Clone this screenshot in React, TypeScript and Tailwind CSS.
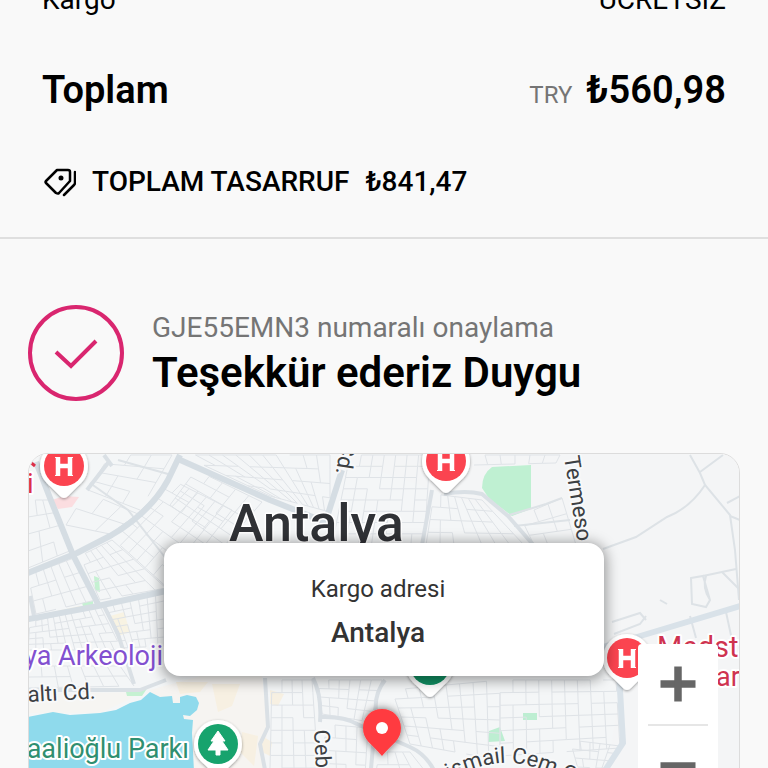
import { Minus, Plus } from "lucide-react";

type Point = [number, number];

type Block = {
  corners: [Point, Point, Point, Point];
  cols: number;
  rows: number;
};

// Residential blocks: each quad is split into cols x rows parcels
const blocks: Block[] = [
  { corners: [[110, 455], [172, 455], [140, 510], [88, 490]], cols: 3, rows: 4 },
  { corners: [[86, 492], [138, 514], [110, 534], [66, 525]], cols: 3, rows: 2 },
  { corners: [[28, 500], [50, 500], [72, 550], [28, 568]], cols: 3, rows: 4 },
  { corners: [[28, 575], [74, 558], [96, 600], [36, 614]], cols: 6, rows: 3 },
  { corners: [[172, 480], [232, 510], [170, 590], [112, 538]], cols: 7, rows: 7 },
  { corners: [[80, 556], [112, 540], [166, 588], [100, 600]], cols: 6, rows: 5 },
  { corners: [[182, 455], [330, 455], [330, 512], [270, 496]], cols: 11, rows: 4 },
  { corners: [[196, 470], [262, 502], [225, 545], [170, 505]], cols: 5, rows: 5 },
  { corners: [[350, 455], [430, 455], [424, 545], [332, 545]], cols: 7, rows: 8 },
  { corners: [[434, 494], [482, 500], [524, 545], [426, 545]], cols: 7, rows: 4 },
  { corners: [[470, 455], [560, 455], [556, 463], [474, 465]], cols: 6, rows: 1 },
  { corners: [[520, 516], [562, 498], [576, 545], [534, 545]], cols: 3, rows: 3 },
  { corners: [[30, 622], [100, 606], [122, 650], [28, 650]], cols: 12, rows: 5 },
  { corners: [[104, 606], [164, 592], [164, 646], [122, 648]], cols: 7, rows: 6 },
  { corners: [[28, 666], [120, 666], [134, 686], [28, 688]], cols: 7, rows: 2 },
  { corners: [[272, 680], [312, 680], [318, 768], [270, 768]], cols: 4, rows: 7 },
  { corners: [[318, 680], [382, 680], [370, 722], [322, 714]], cols: 6, rows: 4 },
  { corners: [[324, 724], [368, 728], [364, 790], [328, 790]], cols: 4, rows: 5 },
  { corners: [[392, 690], [500, 680], [500, 760], [410, 744]], cols: 8, rows: 6 },
  { corners: [[380, 752], [410, 752], [440, 790], [372, 790]], cols: 4, rows: 3 },
  { corners: [[500, 680], [616, 680], [620, 748], [500, 756]], cols: 9, rows: 6 },
  { corners: [[570, 740], [620, 746], [604, 776], [580, 776]], cols: 5, rows: 4 },
];

const mainRoads = [
  "M28 573 77 553 110 536Q150 513 168 480L180 455",
  "M178 459 270 500 330 524",
  "M36 462 50 498 73 555 98 604",
  "M24 620 98 606 166 591",
  "M342 470 328 514",
];

const sideRoads = [
  "M108 463 87 490M104 455 112 466",
  "M432 490 422 545",
  "M444 494Q466 490 482 494L508 516 536 548",
  "M104 606 118 634 134 684",
  "M28 690H140L166 680",
  "M30 596 34 616",
  "M313 678Q322 696 320 722M385 680Q374 694 376 712L370 780",
  "M320 717Q344 716 357 724L410 747Q430 756 438 780",
  "M265 678 268 727 260 744 267 780",
];

const thinRoads = [
  "M690 455 700 473 705 485 730 515 735 550 739 600",
  "M705 485 Q690 508 667 517L636 537 603 549",
  "M700 472 723 455M727 503 740 496M730 516 740 520",
  "M691 578 703 576 710 600 706 607 692 604ZM703 576 736 569M706 576Q702 588 710 600",
  "M722 572 740 590M660 600 667 604M612 622 640 613 646 620",
  "M614 634 640 624 646 616M690 616 696 638M726 612 732 640",
  "M118 460 168 474M90 483 128 510 164 556 200 600",
  "M506 516 546 504 562 498M514 526 570 520",
];

// Streets with a few segments left out, so that the parcels differ in size
function streetPath({ corners, cols, rows }: Block) {
  const [a, b, c, d] = corners;
  const at = (u: number, v: number) => {
    const x = (1 - v) * ((1 - u) * a[0] + u * b[0]) + v * ((1 - u) * d[0] + u * c[0]);
    const y = (1 - v) * ((1 - u) * a[1] + u * b[1]) + v * ((1 - u) * d[1] + u * c[1]);
    return `${x.toFixed(1)} ${y.toFixed(1)}`;
  };
  let path = "";
  for (let i = 0; i <= cols; i++) {
    for (let j = 0; j <= rows; j++) {
      if (i < cols && (i * 3 + j * 5) % 7 !== 0) {
        path += `M${at(i / cols, j / rows)}L${at((i + 1) / cols, j / rows)}`;
      }
      if (j < rows && (i * 5 + j * 3) % 8 !== 0) {
        path += `M${at(i / cols, j / rows)}L${at(i / cols, (j + 1) / rows)}`;
      }
    }
  }
  return path;
}

function PlacePin({ x, y, color, children }: { x: number; y: number; color: string; children?: React.ReactNode }) {
  return (
    <g transform={`translate(${x} ${y})`}>
      <path
        d="M0 -24A24 24 0 0 1 24 0C24 10 19 16 13 21L4 30Q0 34 -4 30L-13 21C-19 16 -24 10 -24 0A24 24 0 0 1 0 -24Z"
        fill="#fff"
        filter="url(#pin-shadow)"
      />
      <circle r="20" fill={color} />
      {children}
    </g>
  );
}

function HospitalPin({ x, y }: { x: number; y: number }) {
  return (
    <PlacePin x={x} y={y} color="#fb4450">
      <path d="M-6 -9V10M6 -9V10M-6 0H6" stroke="#fff" strokeWidth="4.5" fill="none" />
      <path d="M-9 -8.5H-4M4 -8.5H9M-9 9.5H-4M4 9.5H9" stroke="#fff" strokeWidth="1" />
    </PlacePin>
  );
}

function MapCanvas() {
  return (
    <svg
      viewBox="29 454 710 400"
      preserveAspectRatio="xMidYMin slice"
      className="block h-[400px] w-full bg-[#f4f5f6] font-['Roboto',sans-serif]"
      role="img"
      aria-label="Antalya"
    >
      <defs>
        <filter id="pin-shadow" x="-30%" y="-30%" width="160%" height="160%">
          <feDropShadow dx="0" dy="1" stdDeviation="1.5" floodColor="#000" floodOpacity="0.4" />
        </filter>
        <filter id="marker-shadow" x="-50%" y="-50%" width="200%" height="200%">
          <feDropShadow dx="0" dy="0" stdDeviation="4" floodColor="#000" floodOpacity="0.6" />
        </filter>
        <path id="ismail-cem" d="M450 779Q474 766 500 763Q530 760 580 787" />
      </defs>

      {/* Ground */}
      <path d="M28 454H330L600 548 620 690 604 790H28Z" fill="#f4f6f7" />
      <path d="M150 690 200 676H262L268 727 260 790H190Z" fill="#f6f4f1" />
      <path d="M28 694 140 692 128 700 100 713H28Z" fill="#f6f5f2" />
      <path d="M176 682 208 682 200 692 180 694ZM212 684 240 684 232 706 218 712ZM242 732 258 736 254 766 240 752ZM270 690 284 694 278 706 270 704ZM262 736 272 742 270 756 262 752Z" fill="#f7f0e2" />
      <path d="M34 616 80 606 82 609 36 619ZM110 616 124 612 130 632 118 636Z" fill="#f8f3e3" />
      <path d="M52 500 64 496 79 497 72 507 58 509Z" fill="#fbdde0" />
      <path d="M482 488Q482 474 492 467L531 465V509L512 516 500 507 490 500Z" fill="#bff0d2" />
      <path d="M82 603 93 601 93 608 84 609ZM94 576 99 578 100 592 95 590ZM126 692 148 687 142 696 127 696Z" fill="#c5f1d2" />
      <path d="M489 731 500 727 505 741 488 742ZM523 713H537V720H523Z" fill="#bdeed2" />

      {/* Streets */}
      <g fill="none" stroke="#dfe3e7" strokeWidth="1">
        {blocks.map((block, i) => (
          <path key={i} d={streetPath(block)} />
        ))}
      </g>
      <g fill="none" stroke="#dde2e6" strokeWidth="2">
        {thinRoads.map((d) => (
          <path key={d} d={d} />
        ))}
      </g>
      <g fill="none" stroke="#dae0e5" strokeWidth="4" strokeLinejoin="round">
        {sideRoads.map((d) => (
          <path key={d} d={d} />
        ))}
      </g>
      <g fill="none" stroke="#d5dde3" strokeWidth="6" strokeLinejoin="round">
        {mainRoads.map((d) => (
          <path key={d} d={d} />
        ))}
      </g>
      <path
        d="M740 606 637 637 600 648M620 676V690L623 743 604 772"
        fill="none"
        stroke="#d9e2e9"
        strokeWidth="6"
      />

      {/* Sea */}
      <path
        d="M28 717 53 712 70 715 100 713 116 710 130 703 141 700 150 692 160 697 172 696 173 703 180 703 180 697 187 695 196 697 199 703 197 710 190 716 183 715 184 719 193 720 192 733 195 790V860H28Z"
        fill="#8fdaec"
      />

      {/* Street names */}
      <g fill="#3c4043" stroke="#f8f9fa" strokeWidth="4" strokeLinejoin="round" paintOrder="stroke" fontSize="22">
        <text transform="translate(341 441) rotate(99)">Cd.</text>
        <text transform="translate(564 457) rotate(81)">Termeso</text>
        <text transform="translate(28 702) rotate(-3)">altı Cd.</text>
        <text transform="translate(314 730) rotate(87)">Cebesoy</text>
        <text>
          <textPath href="#ismail-cem">ismail Cem C</textPath>
        </text>
      </g>

      {/* Places */}
      <g stroke="#fff" strokeWidth="4" strokeLinejoin="round" paintOrder="stroke" fontSize="27">
        <text x="163" y="665" textAnchor="end" fill="#8250d0">
          ya Arkeoloji
        </text>
        <text x="189" y="758" textAnchor="end" fill="#2f8f70">
          aalioğlu Parkı
        </text>
        <text x="657" y="657" fill="#cf3350" fontSize="29">
          Medstar
        </text>
        <text x="716" y="686" fill="#cf3350">
          ar
        </text>
        <text x="27" y="493" fill="#dc2f48">
          i
        </text>
      </g>
      <path d="M29 461 35 466" stroke="#dc2f48" strokeWidth="3" />
      <text
        x="229"
        y="541"
        fontSize="52"
        fontWeight="500"
        fill="#303236"
        stroke="#fff"
        strokeWidth="3"
        strokeLinejoin="round"
        paintOrder="stroke"
      >
        Antalya
      </text>

      <HospitalPin x={64} y={466} />
      <HospitalPin x={446} y={461} />
      <HospitalPin x={627} y={658} />
      <PlacePin x={430} y={665} color="#129063" />
      <PlacePin x={218} y={744} color="#17a36d">
        <path d="M0 -13 7 -3H4L10 6H2V11H-2V6H-10L-4 -3H-7Z" fill="#fff" stroke="#fff" strokeWidth="1" strokeLinejoin="round" />
      </PlacePin>

      {/* Delivery marker */}
      <path
        d="M382 709C371 709 363 717 363 728C363 740 371 743 382 756C393 743 401 740 401 728C401 717 393 709 382 709Z"
        fill="#ff3b40"
        filter="url(#marker-shadow)"
      />
      <circle cx="382" cy="728" r="6" fill="#fff" />
    </svg>
  );
}

function SavingsIcon() {
  return (
    <svg viewBox="0 0 34 30" className="h-[30px] w-[34px]" fill="none" stroke="currentColor" strokeWidth="2.5" strokeLinecap="round" strokeLinejoin="round" aria-hidden="true">
      <path d="M15 3H26Q28 3 28 5V14L17 26Q16 27 14 26L4 16Q3 15 4 14Z" />
      <path d="M33 5V16Q33 17 32 18L22 28" />
      <circle cx="19" cy="11" r="1.5" fill="currentColor" strokeWidth="2" />
    </svg>
  );
}

export default function App() {
  return (
    <main className="h-screen overflow-hidden bg-[#f9f9f9] font-['Roboto',sans-serif] text-black">
      <section className="-mt-5 border-b-2 border-[#dfdfdf] px-[42px] pb-[35px]">
        <div className="flex justify-between text-[28px] leading-10">
          <span>Kargo</span>
          <span>ÜCRETSİZ</span>
        </div>
        <div className="mt-12 flex items-baseline justify-between leading-[44px]">
          <h2 className="text-[38px] font-semibold">Toplam</h2>
          <p className="flex items-baseline gap-3.5">
            <span className="text-2xl text-[#757575]">TRY</span>
            <strong className="text-[38px] leading-[44px] font-semibold">₺560,98</strong>
          </p>
        </div>
        <div className="mt-[50px] flex items-center gap-4 text-[28px] leading-10 font-medium">
          <SavingsIcon />
          <span>TOPLAM TASARRUF</span>
          <span>₺841,47</span>
        </div>
      </section>

      <section className="px-7 pt-[66px]">
        <div className="flex items-center gap-7">
          <svg viewBox="0 0 96 96" className="size-24 shrink-0" fill="none" stroke="#d9266f" aria-hidden="true">
            <circle cx="48" cy="48" r="46" strokeWidth="4" />
            <path d="M28 47 43 61 68 36" strokeWidth="4" />
          </svg>
          <div>
            <p className="text-[28px] leading-10 text-[#757575]">GJE55EMN3 numaralı onaylama</p>
            <h1 className="text-[42px] leading-[50px] font-semibold">Teşekkür ederiz Duygu</h1>
          </div>
        </div>

        <div className="relative mt-[52px] overflow-hidden rounded-[20px] border border-[#dcdcdc]">
          <MapCanvas />
          <div className="absolute inset-x-[135px] top-[89px] rounded-2xl bg-white pt-7 pr-3 pb-[23px] text-center text-[#333] shadow-[0_2px_14px_2px_rgba(0,0,0,0.4)]">
            <p className="text-2xl leading-9">Kargo adresi</p>
            <p className="mt-1.5 text-[28px] leading-10 font-medium">Antalya</p>
          </div>
          <div className="absolute top-[190px] right-[21px] flex w-20 flex-col items-center rounded bg-white text-[#666]">
            <button type="button" aria-label="Yakınlaştır" className="flex size-20 items-center justify-center">
              <Plus className="size-15" strokeWidth={3} strokeLinecap="butt" />
            </button>
            <div className="h-0.5 w-15 bg-[#e6e6e6]" />
            <button type="button" aria-label="Uzaklaştır" className="flex size-20 items-center justify-center">
              <Minus className="size-15" strokeWidth={3} strokeLinecap="butt" />
            </button>
          </div>
        </div>
      </section>
    </main>
  );
}
